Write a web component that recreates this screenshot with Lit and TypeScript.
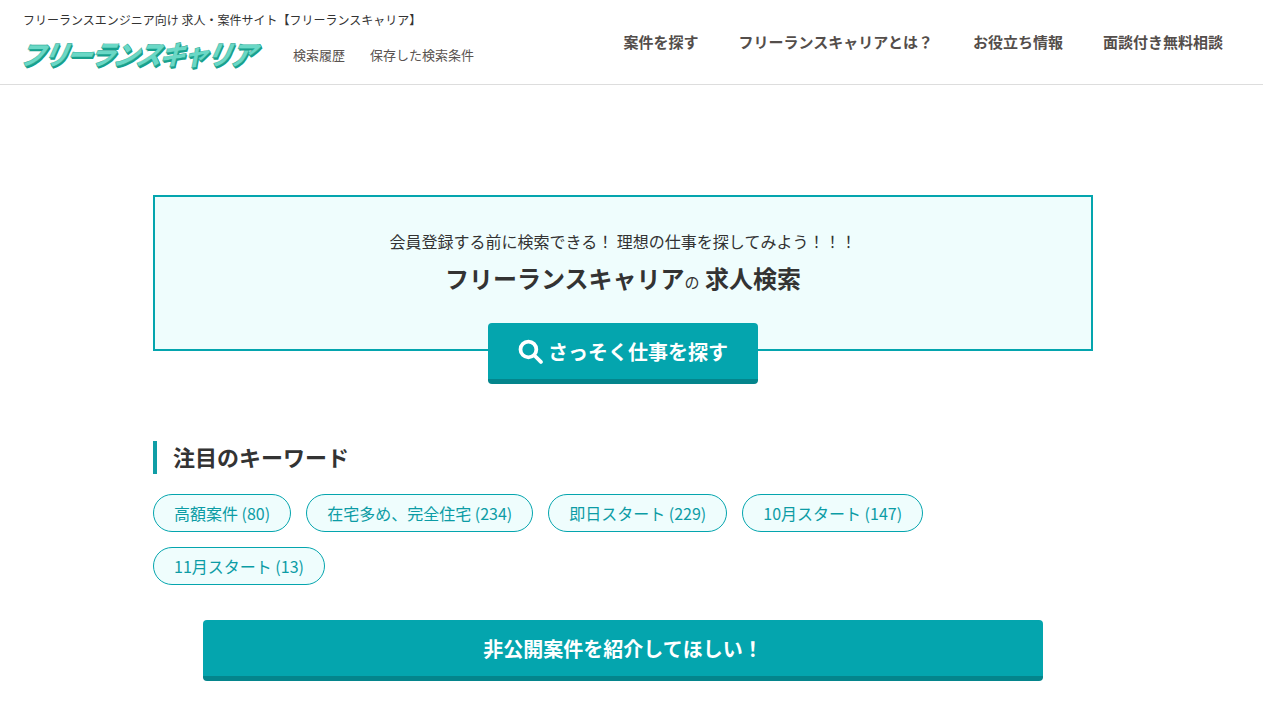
import {css, html, LitElement} from 'lit';
import {customElement} from 'lit/decorators.js';

const keywords = [
  '高額案件 (80)',
  '在宅多め、完全住宅 (234)',
  '即日スタート (229)',
  '10月スタート (147)',
  '11月スタート (13)',
];

const navItems = ['案件を探す', 'フリーランスキャリアとは？', 'お役立ち情報', '面談付き無料相談'];

@customElement('app-root')
export class AppRoot extends LitElement {
  static styles = css`
    :host {
      display: block;
      height: 712px;
      overflow: hidden;
      background: #fff;
      color: #333;
      font-family: "Noto Sans CJK JP", "Noto Sans", sans-serif;
    }

    .header {
      display: flex;
      justify-content: space-between;
      height: 84px;
      padding: 0 40px 0 23px;
      border-bottom: 1px solid #ddd;
    }

    .tagline {
      margin: 11px 0 0;
      font-size: 12px;
      line-height: 18px;
      color: #333;
    }

    .brand-row {
      display: flex;
      align-items: center;
      margin-top: 9px;
    }

    .logo {
      width: 241px;
      height: 30px;
      font-size: 26px;
      line-height: 30px;
      font-weight: 900;
      letter-spacing: -2.6px;
      white-space: nowrap;
      color: #6ad8c6;
      transform: skewX(-24deg) scaleY(1.05);
      transform-origin: left center;
      text-shadow: 1px 1px 0 #17a08c, 2px 2px 0 #17a08c;
      -webkit-text-stroke: 0.4px #17a08c;
    }

    .sub-links {
      display: flex;
      gap: 25px;
      margin-left: 29px;
      padding-top: 2px;
      font-size: 13px;
      color: #595350;
    }

    .nav {
      display: flex;
      gap: 40px;
      padding-top: 31px;
      font-size: 15px;
      line-height: 22px;
      font-weight: 700;
      color: #544e4b;
    }

    .page {
      width: 1246px;
    }

    .main {
      width: 940px;
      margin: 0 auto;
      padding-top: 110px;
    }

    .search-box {
      height: 156px;
      box-sizing: border-box;
      border: 2px solid #04a5ae;
      background: #effdfd;
      text-align: center;
      padding-top: 32px;
    }

    .lead {
      font-size: 16px;
      line-height: 24px;
    }

    .title {
      margin-top: 8px;
      font-size: 24px;
      line-height: 34px;
      font-weight: 700;
    }

    .title small {
      font-size: 15px;
      font-weight: 400;
    }

    .search-wrap {
      display: flex;
      justify-content: center;
      margin-top: -28px;
    }

    .button {
      display: flex;
      align-items: center;
      justify-content: center;
      box-sizing: border-box;
      border-radius: 4px;
      border-bottom: 5px solid #04858c;
      background: #04a5ae;
      color: #fff;
      font-weight: 700;
    }

    .search-button {
      gap: 5px;
      width: 270px;
      height: 61px;
      font-size: 20px;
    }

    .search-button svg {
      width: 25px;
      height: 25px;
    }

    .heading {
      margin: 57px 0 0;
      padding: 0 0 2px 16px;
      border-left: 4px solid #109ea6;
      font-size: 22px;
      line-height: 31px;
      font-weight: 700;
    }

    .keywords {
      display: flex;
      flex-wrap: wrap;
      gap: 15px;
      margin-top: 20px;
    }

    .keyword {
      box-sizing: border-box;
      height: 38px;
      padding: 0 20px;
      border: 1px solid #04a5ae;
      border-radius: 19px;
      background: #effdfd;
      color: #0c9ca5;
      font-size: 16px;
      line-height: 36px;
    }

    .cta {
      width: 840px;
      height: 61px;
      margin: 35px auto 0;
      font-size: 20px;
    }
  `;

  render() {
    return html`
      <header class="header">
        <div>
          <p class="tagline">フリーランスエンジニア向け 求人・案件サイト【フリーランスキャリア】</p>
          <div class="brand-row">
            <div class="logo">フリーランスキャリア</div>
            <div class="sub-links"><span>検索履歴</span><span>保存した検索条件</span></div>
          </div>
        </div>
        <nav class="nav">${navItems.map((item) => html`<span>${item}</span>`)}</nav>
      </header>
      <div class="page">
        <main class="main">
          <section class="search-box">
            <div class="lead">会員登録する前に検索できる！ 理想の仕事を探してみよう！！！</div>
            <div class="title">フリーランスキャリア<small>の</small> 求人検索</div>
          </section>
          <div class="search-wrap">
            <div class="button search-button">
              <svg viewBox="0 0 24 24" fill="none" stroke="#fff" stroke-width="3.6" stroke-linecap="round">
                <circle cx="10" cy="10" r="7.6"></circle>
                <path d="M15.8 15.8 22 22"></path>
              </svg>
              さっそく仕事を探す
            </div>
          </div>
          <h2 class="heading">注目のキーワード</h2>
          <div class="keywords">
            ${keywords.map((k) => html`<span class="keyword">${k}</span>`)}
          </div>
          <div class="button cta">非公開案件を紹介してほしい！</div>
        </main>
      </div>
    `;
  }
}
